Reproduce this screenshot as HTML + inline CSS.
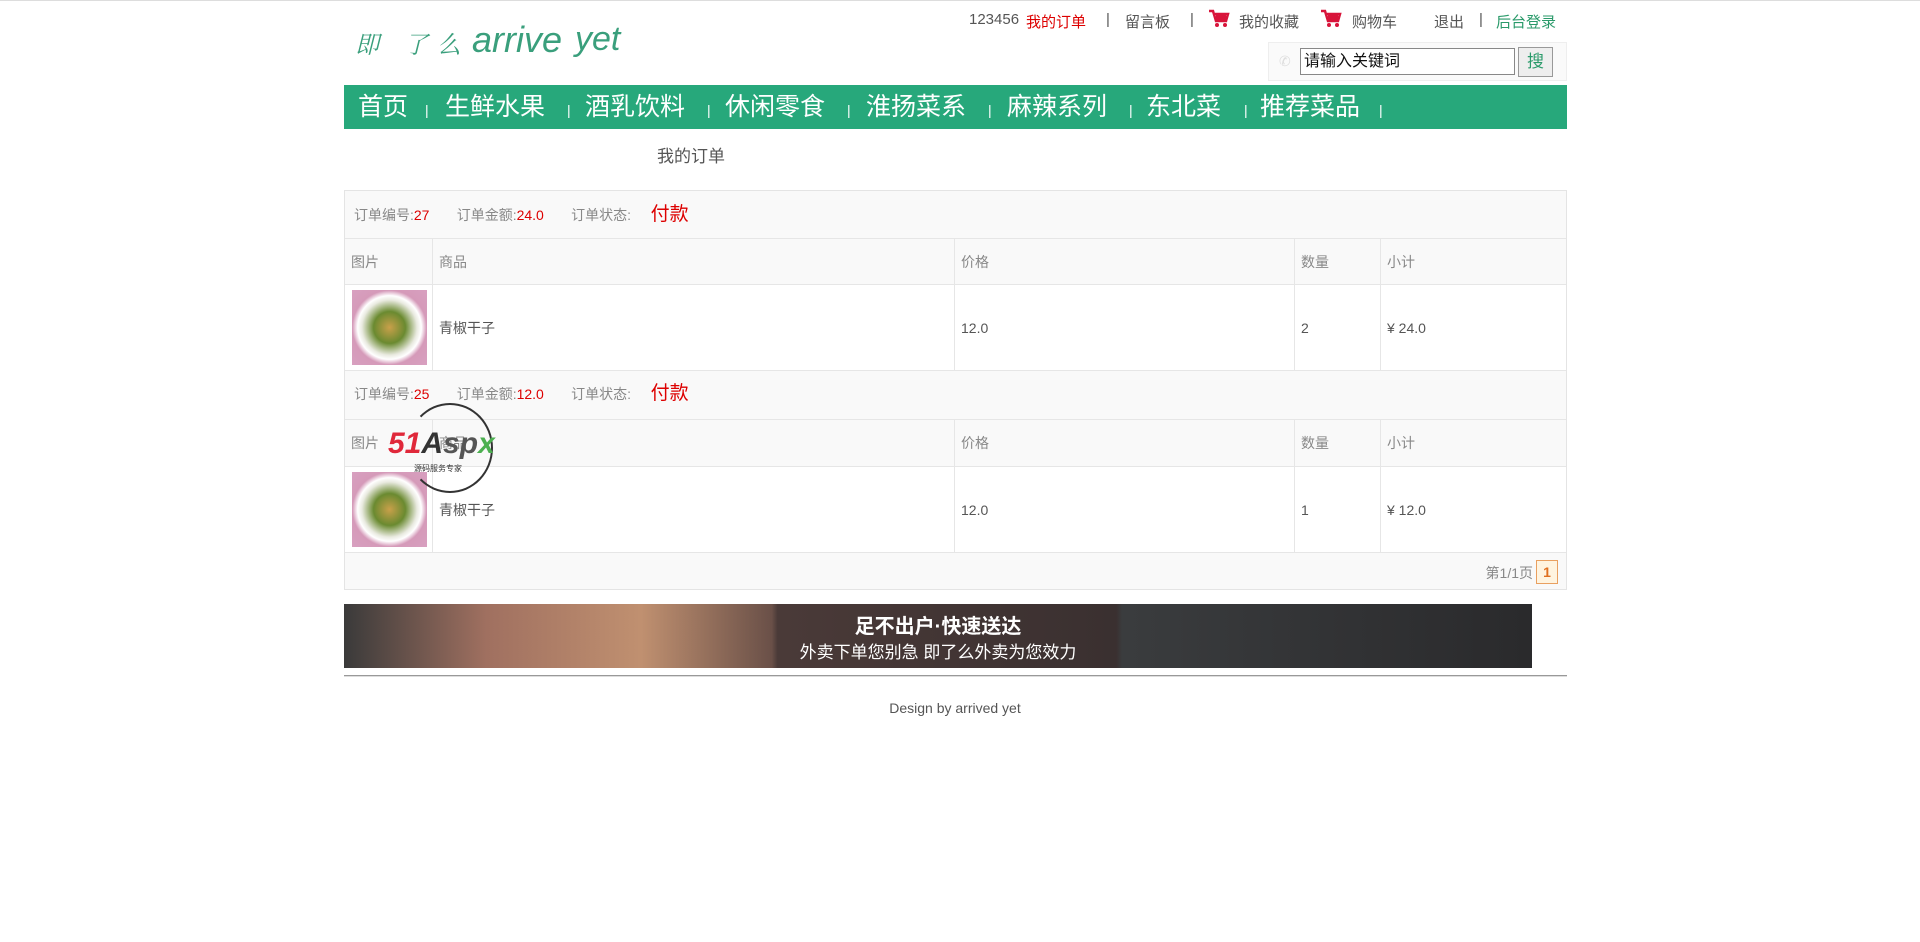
<!DOCTYPE html>
<html><head><meta charset="utf-8">
<style>
*{margin:0;padding:0;box-sizing:border-box}
body{width:1920px;height:942px;background:#fff;font-family:"Liberation Sans","Noto Sans CJK SC",sans-serif;color:#555;position:relative;border-top:1px solid #ddd;overflow:hidden}
.abs{position:absolute}
.t{position:absolute;top:10px;font-size:15px;color:#555;white-space:nowrap}
.lg{position:absolute;color:#3a9f7c;font-style:italic;white-space:nowrap;font-family:"Liberation Sans","Noto Serif CJK SC",sans-serif}
.nav{left:344px;top:84px;width:1223px;height:44px;background:#27a87b}
.n{position:absolute;top:0;color:#fff;font-size:25px;line-height:44px;white-space:nowrap}
.ns{position:absolute;top:0;color:#fff;font-size:14px;line-height:50px}
.box{left:344px;top:189px;width:1223px;height:400px;border:1px solid #e4e4e4;background:#f9f9f9}
.row{position:absolute;left:0;width:1221px;border-bottom:1px solid #e6e6e6;font-size:14px}
.oh{background:#f9f9f9;color:#888;padding-left:9px}
.oh b{color:#d00;font-weight:normal}
.oh .pay{color:#d00;font-size:19px;margin-left:8px}
.hd{background:#f9f9f9;color:#888}
.it{background:#fff;color:#555}
.c{position:absolute;top:0;height:100%;border-left:1px solid #e6e6e6;padding-left:6px;display:flex;align-items:center}
.food{position:absolute;left:7px;width:75px;height:75px;background:radial-gradient(circle at 50% 50%,#c9a04a 0,#6a8a30 30%,#e9eae0 52%,#fff 60%,#d59ab9 70%,#d8a0c0 100%)}
</style></head><body>
<div class="t" style="left:969px">123456</div>
<div class="t" style="left:1026px;color:#d00">我的订单</div>
<div class="t" style="left:1106px">|</div>
<div class="t" style="left:1125px">留言板</div>
<div class="t" style="left:1190px">|</div>
<svg class="abs" style="left:1208px;top:8px" width="22" height="20" viewBox="0 0 22 20"><path d="M1 2h4l3 10h10l2-7H7" fill="none" stroke="#d8143a" stroke-width="2.5"/><rect x="8" y="5" width="10" height="6" fill="#d8143a"/><circle cx="9" cy="16" r="2" fill="#d8143a"/><circle cx="17" cy="16" r="2" fill="#d8143a"/></svg>
<div class="t" style="left:1239px">我的收藏</div>
<svg class="abs" style="left:1320px;top:8px" width="22" height="20" viewBox="0 0 22 20"><path d="M1 2h4l3 10h10l2-7H7" fill="none" stroke="#d8143a" stroke-width="2.5"/><rect x="8" y="5" width="10" height="6" fill="#d8143a"/><circle cx="9" cy="16" r="2" fill="#d8143a"/><circle cx="17" cy="16" r="2" fill="#d8143a"/></svg>
<div class="t" style="left:1352px">购物车</div>
<div class="t" style="left:1434px">退出</div>
<div class="t" style="left:1479px">|</div>
<div class="t" style="left:1496px;color:#2a9a6a">后台登录</div>

<div class="lg" style="left:355px;top:24px;font-size:24px">即</div>
<div class="lg" style="left:404px;top:24px;font-size:24px">了</div>
<div class="lg" style="left:437px;top:24px;font-size:24px">么</div>
<div class="lg" style="left:472px;top:18px;font-size:36px;font-weight:300">arrive</div>
<div class="lg" style="left:575px;top:19px;font-size:34px;font-weight:300">yet</div>

<div class="abs" style="left:1268px;top:41px;width:299px;height:39px;background:#fafafa;border:1px solid #eee"></div>
<div class="abs" style="left:1279px;top:52px;color:#ddd;font-size:14px">✆</div>
<div class="abs" style="left:1300px;top:47px;width:215px;height:27px;border:1px solid #888;background:#fff;font-size:16px;color:#111;padding:2px 3px;line-height:22px">请输入关键词</div>
<div class="abs" style="left:1518px;top:46px;width:35px;height:30px;border:1px solid #999;background:#eee;font-size:17px;color:#2a9a6a;text-align:center;line-height:28px">搜</div>
<div class="abs nav">
<div class="n" style="left:14px">首页</div><div class="ns" style="left:81px">|</div>
<div class="n" style="left:101px">生鲜水果</div><div class="ns" style="left:223px">|</div>
<div class="n" style="left:241px">酒乳饮料</div><div class="ns" style="left:363px">|</div>
<div class="n" style="left:381px">休闲零食</div><div class="ns" style="left:503px">|</div>
<div class="n" style="left:522px">淮扬菜系</div><div class="ns" style="left:644px">|</div>
<div class="n" style="left:663px">麻辣系列</div><div class="ns" style="left:785px">|</div>
<div class="n" style="left:802px">东北菜</div><div class="ns" style="left:900px">|</div>
<div class="n" style="left:916px">推荐菜品</div><div class="ns" style="left:1035px">|</div>
</div>
<div class="abs" style="left:657px;top:141px;font-size:17px;color:#555">我的订单</div>
<div class="abs box">
 <div class="row oh" style="top:0;height:48px;line-height:48px">订单编号:<b>27</b> &nbsp;&nbsp;&nbsp;&nbsp;&nbsp; 订单金额:<b>24.0</b> &nbsp;&nbsp;&nbsp;&nbsp;&nbsp; 订单状态: &nbsp; <span class="pay">付款</span></div>
 <div class="row hd" style="top:48px;height:46px"><div class="c" style="left:0;border:0">图片</div><div class="c" style="left:87px">商品</div><div class="c" style="left:609px">价格</div><div class="c" style="left:949px">数量</div><div class="c" style="left:1035px">小计</div></div>
 <div class="row it" style="top:94px;height:86px"><div class="food" style="top:5px"></div><div class="c" style="left:87px">青椒干子</div><div class="c" style="left:609px">12.0</div><div class="c" style="left:949px">2</div><div class="c" style="left:1035px">¥ 24.0</div></div>
 <div class="row oh" style="top:180px;height:49px;line-height:46px">订单编号:<b>25</b> &nbsp;&nbsp;&nbsp;&nbsp;&nbsp; 订单金额:<b>12.0</b> &nbsp;&nbsp;&nbsp;&nbsp;&nbsp; 订单状态: &nbsp; <span class="pay">付款</span></div>
 <div class="row hd" style="top:229px;height:47px"><div class="c" style="left:0;border:0">图片</div><div class="c" style="left:87px">商品</div><div class="c" style="left:609px">价格</div><div class="c" style="left:949px">数量</div><div class="c" style="left:1035px">小计</div></div>
 <div class="row it" style="top:276px;height:86px"><div class="food" style="top:5px"></div><div class="c" style="left:87px">青椒干子</div><div class="c" style="left:609px">12.0</div><div class="c" style="left:949px">1</div><div class="c" style="left:1035px">¥ 12.0</div></div>
 <div class="abs" style="right:33px;top:372px;font-size:14px;color:#888">第1/1页</div>
 <div class="abs" style="right:8px;top:369px;width:22px;height:24px;border:1px solid #e9a060;background:#fff4e0;color:#e07020;font-weight:bold;text-align:center;line-height:22px;font-size:14px">1</div>
</div>
<div class="abs" style="left:407px;top:402px;width:86px;height:90px;border:2px solid #333;border-radius:50%;border-left-color:transparent"></div>
<div class="abs" style="left:388px;top:426px;font-size:30px;font-weight:bold;font-style:italic;white-space:nowrap"><span style="color:#e0283a">51</span><span style="color:#333">A</span><span style="color:#555">sp</span><span style="color:#4caf50">x</span></div>
<div class="abs" style="left:414px;top:462px;font-size:8px;color:#333">源码服务专家</div>
<div class="abs" style="left:344px;top:603px;width:1188px;height:64px;background:linear-gradient(90deg,#3a3a3a 0,#a07060 12%,#c09070 25%,#6a5048 36%,#4a3a38 36.5%,#3a3030 65%,#3a3c3e 65.5%,#2a2a2c 100%)">
 <div class="abs" style="left:0;width:100%;top:6px;text-align:center;color:#fff;font-size:20px;font-weight:bold">足不出户·快速送达</div>
 <div class="abs" style="left:0;width:100%;top:34px;text-align:center;color:#fff;font-size:17px">外卖下单您别急 即了么外卖为您效力</div>
</div>
<div class="abs" style="left:344px;top:674px;width:1223px;height:2px;border-top:1px solid #999;border-bottom:1px solid #ddd"></div>
<div class="abs" style="left:0;width:1910px;top:699px;text-align:center;font-size:14px;color:#555">Design by arrived yet</div>
</body></html>
